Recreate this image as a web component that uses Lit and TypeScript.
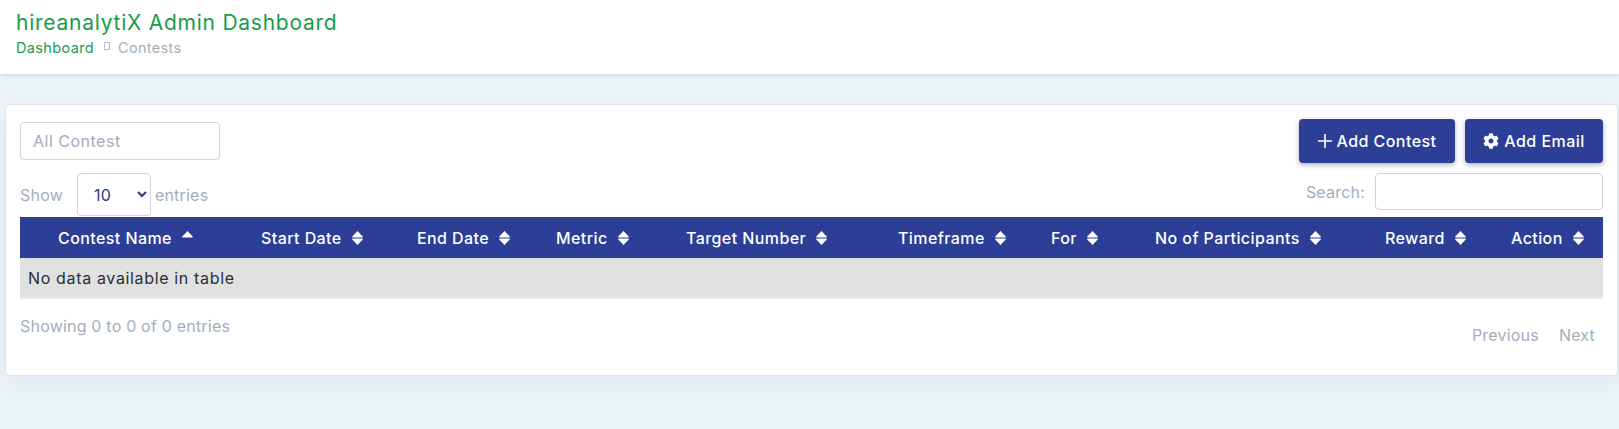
import { LitElement, html, css, svg } from 'lit';
import { customElement } from 'lit/decorators.js';

const GEAR =
  'M487.4 315.7l-42.6-24.6c4.3-23.2 4.3-47 0-70.2l42.6-24.6c4.9-2.8 7.1-8.6 5.5-14-11.1-35.6-30-67.8-54.7-94.6-3.8-4.1-10-5.1-14.8-2.3L380.8 110c-17.9-15.4-38.5-27.3-60.8-35.1V25.8c0-5.6-3.9-10.5-9.4-11.7-36.7-8.2-74.3-7.8-109.2 0-5.5 1.2-9.4 6.1-9.4 11.7V75c-22.2 7.9-42.8 19.8-60.8 35.1L88.7 85.5c-4.9-2.8-11-1.9-14.8 2.3-24.7 26.7-43.6 58.9-54.7 94.6-1.7 5.4.6 11.2 5.5 14L67.3 221c-4.3 23.2-4.3 47 0 70.2l-42.6 24.6c-4.9 2.8-7.1 8.6-5.5 14 11.1 35.6 30 67.8 54.7 94.6 3.8 4.1 10 5.1 14.8 2.3l42.6-24.6c17.9 15.4 38.5 27.3 60.8 35.1v49.2c0 5.6 3.9 10.5 9.4 11.7 36.7 8.2 74.3 7.8 109.2 0 5.5-1.2 9.4-6.1 9.4-11.7v-49.2c22.2-7.9 42.8-19.8 60.8-35.1l42.6 24.6c4.9 2.8 11 1.9 14.8-2.3 24.7-26.7 43.6-58.9 54.7-94.6 1.5-5.5-.7-11.3-5.6-14.1zM256 336c-44.1 0-80-35.9-80-80s35.9-80 80-80 80 35.9 80 80-35.9 80-80 80z';

const COLUMNS: { label: string; width: number; pad: number }[] = [
  { label: 'Contest Name', width: 241, pad: 38 },
  { label: 'Start Date', width: 156, pad: 0 },
  { label: 'End Date', width: 139, pad: 0 },
  { label: 'Metric', width: 130, pad: 0 },
  { label: 'Target Number', width: 212, pad: 0 },
  { label: 'Timeframe', width: 153, pad: 0 },
  { label: 'For', width: 104, pad: 0 },
  { label: 'No of Participants', width: 230, pad: 0 },
  { label: 'Reward', width: 126, pad: 0 },
  { label: 'Action', width: 92, pad: 0 },
];

@customElement('app-root')
export class AppRoot extends LitElement {
  static styles = css`
    :host {
      display: block;
      min-height: 429px;
      background: #edf4f8;
      font-family: Inter, 'Noto Sans', sans-serif;
      font-size: 16px;
      letter-spacing: 0.2px;
      color: #a3aeba;
    }
    .topbar {
      height: 74px;
      box-sizing: border-box;
      padding: 9px 16px 0;
      background: #fff;
      box-shadow: 0 1px 5px rgba(120, 140, 155, 0.3);
    }
    h1 {
      margin: 0;
      font-size: 21px;
      font-weight: 400;
      line-height: 27px;
      letter-spacing: 0.75px;
      color: #1a9c4b;
    }
    .crumbs {
      display: flex;
      align-items: center;
      margin-top: 2px;
      font-size: 14.5px;
      line-height: 20px;
      letter-spacing: 0.35px;
    }
    .crumbs .home {
      color: #1a9c4b;
    }
    .tofu {
      width: 4px;
      height: 6px;
      margin: -4px 8px 0 10px;
      border: 1px solid #b8c2cc;
    }
    main {
      padding: 30px 1px 0 5px;
    }
    .card {
      height: 272px;
      box-sizing: border-box;
      padding: 14px 14px 0 14px;
      background: #fff;
      border: 1px solid #dce2e7;
      border-radius: 4px;
      box-shadow: 0 8px 26px rgba(120, 140, 155, 0.1);
    }
    .toolbar,
    .controls,
    .footer {
      display: flex;
      justify-content: space-between;
    }
    .toolbar {
      align-items: center;
    }
    .filter {
      width: 200px;
      height: 38px;
      box-sizing: border-box;
      padding: 0 12px;
      border: 1px solid #ced4da;
      border-radius: 4px;
      font: inherit;
      letter-spacing: 0.5px;
      outline: none;
    }
    .filter::placeholder {
      color: #a3aeba;
      opacity: 1;
    }
    .actions {
      display: flex;
      gap: 10px;
    }
    button {
      display: flex;
      align-items: center;
      justify-content: center;
      height: 44px;
      padding: 0;
      border: 0;
      border-radius: 4px;
      background: #2c3e96;
      color: #fff;
      font: inherit;
      font-weight: 500;
      letter-spacing: 0.45px;
      box-shadow: 0 2px 5px rgba(30, 40, 90, 0.35);
    }
    .add-contest {
      width: 156px;
      gap: 5px;
    }
    .add-email {
      width: 138px;
      gap: 5px;
    }
    .add-contest svg {
      width: 14px;
      height: 14px;
    }
    .add-email svg {
      width: 16px;
      height: 16px;
    }
    .controls {
      margin-top: 10px;
      height: 44px;
    }
    .length {
      display: flex;
      align-items: center;
      height: 43px;
    }
    select {
      width: 74px;
      height: 43px;
      margin: 0 4px 0 14px;
      padding: 0 0 0 12px;
      background: #fff;
      border: 1px solid #ced4da;
      border-radius: 4px;
      color: #2b3a80;
      font: inherit;
      letter-spacing: inherit;
      outline: none;
    }
    .search {
      display: flex;
      align-items: center;
      gap: 10px;
      height: 37px;
    }
    .search input {
      width: 228px;
      height: 37px;
      box-sizing: border-box;
      border: 1px solid #ced4da;
      border-radius: 4px;
      outline: none;
    }
    table {
      width: 1583px;
      table-layout: fixed;
      border-collapse: collapse;
    }
    th {
      height: 41px;
      padding: 0;
      background: #2c3e96;
      color: #fff;
      font-size: 16px;
      font-weight: 500;
      letter-spacing: 0.42px;
      text-align: left;
      white-space: nowrap;
    }
    .head {
      display: flex;
      align-items: center;
      gap: 10px;
    }
    .head svg {
      width: 11px;
      height: 14px;
      flex: none;
    }
    td {
      height: 40px;
      padding: 0 0 0 8px;
      background: #e1e1e1;
      color: #2a2f38;
      letter-spacing: 0.65px;
      border-bottom: 1px solid #f1f1f1;
    }
    .footer {
      align-items: flex-start;
    }
    .info {
      margin-top: 16px;
      line-height: 22px;
    }
    .pager {
      display: flex;
      gap: 20px;
      margin: 25px 8px 0 0;
      line-height: 22px;
    }
  `;

  private sortIcon(index: number) {
    return html`<svg viewBox="0 0 11 14" aria-hidden="true">
      ${svg`<path fill="#fff" d="M5.5 0 L10.7 5.4 Q11.2 6.4 10.2 6.4 H0.8 Q-0.2 6.4 0.3 5.4 Z" />`}
      ${index === 0
        ? null
        : svg`<path fill="#fff" d="M5.5 14 L10.7 8.6 Q11.2 7.6 10.2 7.6 H0.8 Q-0.2 7.6 0.3 8.6 Z" />`}
    </svg>`;
  }

  render() {
    return html`
      <header class="topbar">
        <h1>hireanalytiX Admin Dashboard</h1>
        <div class="crumbs">
          <span class="home">Dashboard</span>
          <span class="tofu"></span>
          <span>Contests</span>
        </div>
      </header>
      <main>
        <section class="card">
          <div class="toolbar">
            <input class="filter" placeholder="All Contest" />
            <div class="actions">
              <button class="add-contest">
                <svg viewBox="0 0 14 14" aria-hidden="true">
                  <path d="M7 0v14M0 7h14" stroke="#fff" stroke-width="1.6" fill="none" />
                </svg>
                Add Contest
              </button>
              <button class="add-email">
                <svg viewBox="0 0 512 512" aria-hidden="true">
                  <path fill="#fff" d="${GEAR}" />
                </svg>
                Add Email
              </button>
            </div>
          </div>
          <div class="controls">
            <label class="length">
              Show
              <select><option>10</option><option>25</option><option>50</option></select>
              entries
            </label>
            <label class="search">Search: <input /></label>
          </div>
          <table>
            <colgroup>
              ${COLUMNS.map((c) => html`<col style="width:${c.width}px" />`)}
            </colgroup>
            <thead>
              <tr>
                ${COLUMNS.map(
                  (c, i) => html`<th>
                    <div class="head" style="padding-left:${c.pad}px">
                      ${c.label} ${this.sortIcon(i)}
                    </div>
                  </th>`,
                )}
              </tr>
            </thead>
            <tbody>
              <tr><td colspan="10">No data available in table</td></tr>
            </tbody>
          </table>
          <div class="footer">
            <div class="info">Showing 0 to 0 of 0 entries</div>
            <div class="pager"><span>Previous</span><span>Next</span></div>
          </div>
        </section>
      </main>
    `;
  }
}
